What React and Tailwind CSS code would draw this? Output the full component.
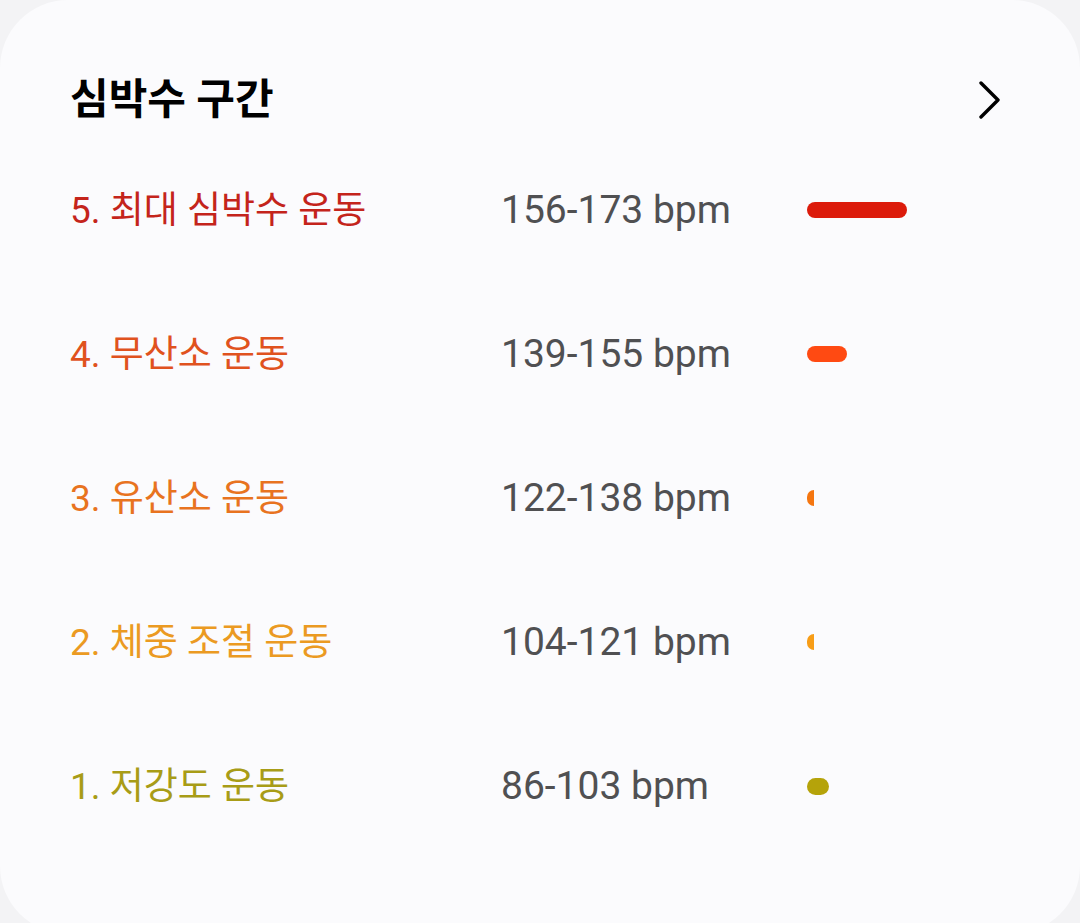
import React from "react";

const zones = [
  { label: "5. 최대 심박수 운동", range: "156-173 bpm", text: "text-[#c4241b]", bar: "w-[100px] h-[16px] rounded-full bg-[#dc1b0b]" },
  { label: "4. 무산소 운동", range: "139-155 bpm", text: "text-[#e0521e]", bar: "w-[40px] h-[16px] rounded-full bg-[#ff4a12]" },
  { label: "3. 유산소 운동", range: "122-138 bpm", text: "text-[#e8731f]", bar: "w-[7px] h-[16px] rounded-l-full rounded-r-[3px] bg-[#f57610]" },
  { label: "2. 체중 조절 운동", range: "104-121 bpm", text: "text-[#eb9a22]", bar: "w-[7px] h-[16px] rounded-l-full rounded-r-[3px] bg-[#f79d17]" },
  { label: "1. 저강도 운동", range: "86-103 bpm", text: "text-[#a89c17]", bar: "w-[22px] h-[17px] rounded-full bg-[#b5a30a]" },
];

export default function App() {
  return (
    <div
      className="w-[1080px] h-[923px] overflow-hidden bg-[#f3f3f5]"
      style={{ fontFamily: 'Roboto, "Noto Sans CJK KR", sans-serif' }}
    >
      <div className="h-[934px] rounded-[68px] bg-[#fbfbfd] pl-[70px] pr-[78px]">
        {/* header */}
        <div className="flex items-center justify-between h-[52px] pt-[74px] box-content">
          <h1 className="text-[42px] font-bold text-black leading-none">심박수 구간</h1>
          <svg width="24" height="38" viewBox="0 0 24 38" fill="none">
            <path d="M3 2 L20 19 L3 36" stroke="#000" strokeWidth="3.4" strokeLinecap="round" strokeLinejoin="round" />
          </svg>
        </div>

        {/* zones */}
        <div className="mt-[12px]">
          {zones.map((z) => (
            <div key={z.label} className="flex items-center h-[144px]">
              <div className={`w-[431px] text-[37px] leading-none ${z.text}`}>{z.label}</div>
              <div className="w-[306px] text-[39px] leading-none text-[#505052]">{z.range}</div>
              <div className={z.bar} />
            </div>
          ))}
        </div>
      </div>
    </div>
  );
}
